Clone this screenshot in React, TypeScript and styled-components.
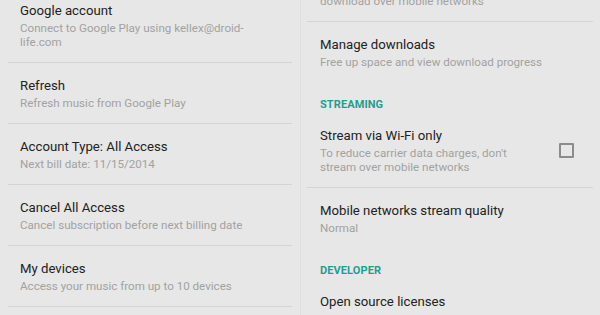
import React from 'react';
import styled, { createGlobalStyle } from 'styled-components';

const GlobalStyle = createGlobalStyle`
  html, body {
    margin: 0;
    padding: 0;
    background: #e7e7e7;
  }
  body {
    font-family: Roboto, "Noto Sans", "Liberation Sans", sans-serif;
  }
`;

const Screen = styled.div`
  width: 600px;
  height: 315px;
  overflow: hidden;
  display: grid;
  grid-template-columns: 301px 299px;
  background: #e7e7e7;
`;

const Column = styled.div<{ offset: number; side: 'left' | 'right' }>`
  margin-top: ${({ offset }) => offset}px;
  padding: ${({ side }) => (side === 'left' ? '0 8px 0 8px' : '0 7px 0 6px')};
  border-right: ${({ side }) => (side === 'left' ? '1px solid #dddddd' : 'none')};
  display: flex;
  flex-direction: column;
`;

const Row = styled.div<{ divider: boolean; inset: number }>`
  display: flex;
  align-items: center;
  gap: 12px;
  padding: 13px 19px 13px ${({ inset }) => inset}px;
  border-bottom: 1px solid ${({ divider }) => (divider ? '#d4d4d4' : 'transparent')};
`;

const TextBlock = styled.div`
  flex: 1;
  min-width: 0;
`;

const Title = styled.div`
  font-size: 13.2px;
  line-height: 20px;
  color: #222222;
`;

const Summary = styled.div`
  font-size: 11.6px;
  line-height: 14px;
  color: #a2a2a2;
  white-space: pre-line;
`;

const Header = styled.div`
  padding: 15px 13px 1px;
  font-size: 11px;
  line-height: 14px;
  font-weight: 700;
  color: #1d9f8f;
  letter-spacing: 0.1px;
`;

const Checkbox = styled.div`
  width: 11px;
  height: 11px;
  border: 2px solid #8c8c8c;
  border-radius: 1px;
  flex-shrink: 0;
`;

type Pref = {
  kind: 'pref';
  title: string;
  summary?: string;
  divider: boolean;
  checkbox?: boolean;
};

type Cat = { kind: 'header'; label: string };

const leftItems: Pref[] = [
  {
    kind: 'pref',
    title: 'Google account',
    summary: 'Connect to Google Play using kellex@droid-\nlife.com',
    divider: true,
  },
  { kind: 'pref', title: 'Refresh', summary: 'Refresh music from Google Play', divider: true },
  {
    kind: 'pref',
    title: 'Account Type: All Access',
    summary: 'Next bill date: 11/15/2014',
    divider: true,
  },
  {
    kind: 'pref',
    title: 'Cancel All Access',
    summary: 'Cancel subscription before next billing date',
    divider: true,
  },
  {
    kind: 'pref',
    title: 'My devices',
    summary: 'Access your music from up to 10 devices',
    divider: true,
  },
];

const rightItems: (Pref | Cat)[] = [
  {
    kind: 'pref',
    title: 'Download via Wi-Fi only',
    summary: "To reduce carrier data charges, don't\ndownload over mobile networks",
    divider: true,
  },
  {
    kind: 'pref',
    title: 'Manage downloads',
    summary: 'Free up space and view download progress',
    divider: false,
  },
  { kind: 'header', label: 'STREAMING' },
  {
    kind: 'pref',
    title: 'Stream via Wi-Fi only',
    summary: "To reduce carrier data charges, don't\nstream over mobile networks",
    divider: true,
    checkbox: true,
  },
  {
    kind: 'pref',
    title: 'Mobile networks stream quality',
    summary: 'Normal',
    divider: false,
  },
  { kind: 'header', label: 'DEVELOPER' },
  { kind: 'pref', title: 'Open source licenses', divider: false },
];

const PrefRow: React.FC<{ item: Pref; inset: number }> = ({ item, inset }) => (
  <Row divider={item.divider} inset={inset}>
    <TextBlock>
      <Title>{item.title}</Title>
      {item.summary && <Summary>{item.summary}</Summary>}
    </TextBlock>
    {item.checkbox && <Checkbox />}
  </Row>
);

export default function App() {
  return (
    <>
      <GlobalStyle />
      <Screen>
        <Column side="left" offset={-12}>
          {leftItems.map((item) => (
            <PrefRow key={item.title} item={item} inset={12} />
          ))}
        </Column>
        <Column side="right" offset={-53}>
          {rightItems.map((item) =>
            item.kind === 'header' ? (
              <Header key={item.label}>{item.label}</Header>
            ) : (
              <PrefRow key={item.title} item={item} inset={13} />
            )
          )}
        </Column>
      </Screen>
    </>
  );
}
